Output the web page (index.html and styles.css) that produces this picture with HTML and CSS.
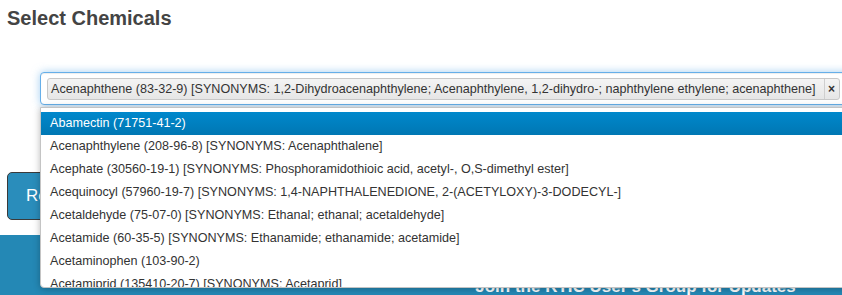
FILE: index.html
```html
<!DOCTYPE html>
<html lang="en">
<head>
  <meta charset="UTF-8">
  <title>Select Chemicals</title>
  <link rel="stylesheet" href="styles.css">
</head>
<body>
  <div class="page">
    <h3 class="title">Select Chemicals</h3>

    <div class="chem-select">
      <div class="choices">
        <span class="choice">
          <span class="choice-label">Acenaphthene (83-32-9) [SYNONYMS: 1,2-Dihydroacenaphthylene; Acenaphthylene, 1,2-dihydro-; naphthylene ethylene; acenaphthene]</span>
          <span class="choice-close">&times;</span>
        </span>
      </div>

      <div class="dropdown">
        <ul class="results">
          <li class="highlighted">Abamectin (71751-41-2)</li>
          <li>Acenaphthylene (208-96-8) [SYNONYMS: Acenaphthalene]</li>
          <li>Acephate (30560-19-1) [SYNONYMS: Phosphoramidothioic acid, acetyl-, O,S-dimethyl ester]</li>
          <li>Acequinocyl (57960-19-7) [SYNONYMS: 1,4-NAPHTHALENEDIONE, 2-(ACETYLOXY)-3-DODECYL-]</li>
          <li>Acetaldehyde (75-07-0) [SYNONYMS: Ethanal; ethanal; acetaldehyde]</li>
          <li>Acetamide (60-35-5) [SYNONYMS: Ethanamide; ethanamide; acetamide]</li>
          <li>Acetaminophen (103-90-2)</li>
          <li>Acetamiprid (135410-20-7) [SYNONYMS: Acetaprid]</li>
          <li>Acetochlor (34256-82-1)</li>
        </ul>
      </div>
    </div>

    <button type="button" class="btn-run">Retrieve Data</button>
  </div>

  <footer class="band">
    <div class="band-col"></div>
    <div class="band-col">
      <h4>Join the RTIC User's Group for Updates</h4>
    </div>
  </footer>
</body>
</html>
```

FILE: styles.css
```css
html, body {
  overflow: hidden;
}

body {
  margin: 0;
  font-family: "Liberation Sans", Arial, sans-serif;
  background: white;
  color: #333;
}

.page {
  padding: 0 7px;
}

.title {
  margin: 7px 0 0;
  font-size: 20px;
  line-height: 22px;
  font-weight: bold;
  color: #444;
}

/* select2-ish widget */
.chem-select {
  position: relative;
  margin: 43px 0 0 33px;
  width: 840px;
}

.choices {
  display: flex;
  padding: 5px 5px 4px 6px;
  border: 1px solid #66afe9;
  border-radius: 4px;
  background: white;
  box-shadow: inset 0 1px 1px rgba(0, 0, 0, 0.075), 0 0 8px rgba(102, 175, 233, 0.6);
}

.choice {
  display: inline-flex;
  border: 1px solid #c8c8c8;
  border-radius: 3px;
  background: linear-gradient(#f4f4f4, #e6e6e6);
  font-size: 12.6px;
  line-height: 20px;
  color: #333;
  white-space: nowrap;
}

.choice-label {
  padding: 0 8px 0 3px;
}

.choice-close {
  width: 14px;
  border-left: 1px solid #cfcfcf;
  text-align: center;
  font-size: 12px;
  font-weight: bold;
  color: #333;
}

.dropdown {
  position: absolute;
  top: calc(100% + 2px);
  left: 0;
  right: 0;
  padding-top: 4px;
  background: white;
  border: 1px solid #c4c4c4;
  border-radius: 0 0 4px 4px;
  box-shadow: 0 1px 7px rgba(0, 0, 0, 0.28);
  z-index: 10;
}

.results {
  list-style: none;
  margin: 0;
  padding: 0;
  max-height: 175px;
  overflow: hidden;
}

.results li {
  padding: 3px 9px;
  font-size: 12.6px;
  line-height: 17px;
  color: #333;
  white-space: nowrap;
}

.results li.highlighted {
  background: linear-gradient(#0088cc, #0077b3);
  color: white;
}

.btn-run {
  display: block;
  margin-top: 67px;
  padding: 14px 18px;
  border: 1px solid #3a3a3a;
  border-radius: 5px;
  background-color: #2a8dbb;
  color: white;
  font-family: "Liberation Sans", Arial, sans-serif;
  font-size: 17px;
  line-height: 18px;
}

.band {
  display: flex;
  margin-top: 15px;
  padding: 42px 0 30px;
  background-color: #2488b5;
  color: white;
}

.band-col {
  flex: 1;
  text-align: center;
}

.band h4 {
  margin: 0 0 0 8px;
  font-size: 17px;
  line-height: 20px;
  font-weight: bold;
}
```
